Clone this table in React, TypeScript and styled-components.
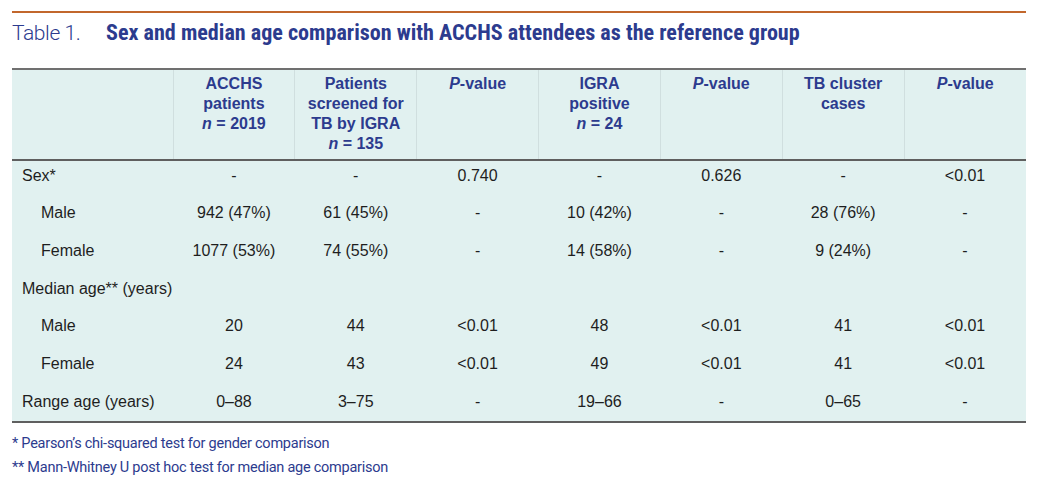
import React from "react";
import styled, { createGlobalStyle } from "styled-components";

const GlobalStyle = createGlobalStyle`
  html, body { margin: 0; padding: 0; background: #ffffff; }
  body { font-family: "Liberation Sans", Arial, sans-serif; }
`;

const BLUE = "#2c3b8e";

const Page = styled.div`
  width: 1014px;
  padding: 11px 12px 0 12px;
`;

const Rule = styled.div`
  height: 2px;
  background: #c2672c;
`;

const Title = styled.h1`
  margin: 6px 0 0 0;
  height: 26px;
  line-height: 26px;
  font-size: 21px;
  font-weight: 400;
  color: ${BLUE};
  white-space: nowrap;
  display: flex;
  align-items: baseline;
`;

const TableLabel = styled.span`
  display: inline-block;
  width: 94px;
  font-family: Roboto, "Liberation Sans", sans-serif;
  font-weight: 300;
  letter-spacing: -0.4px;
`;

const TitleText = styled.span`
  font-family: "Liberation Sans Narrow", "Roboto Condensed", Roboto, sans-serif;
  font-weight: 700;
  font-size: 22.1px;
`;

const Table = styled.table`
  margin-top: 23px;
  width: 1014px;
  border-collapse: collapse;
  table-layout: fixed;
  background: #e1f1f0;
  border-top: 2px solid #707070;
  border-bottom: 2px solid #5f5f5f;
  font-size: 16px;
  line-height: 20px;
`;

const HeadCell = styled.th<{ $first?: boolean }>`
  vertical-align: top;
  text-align: center;
  padding: 4px 0 5px 0;
  font-weight: 700;
  color: ${BLUE};
  white-space: nowrap;
  border-bottom: 2px solid #5f5f5f;
  border-left: ${(p) => (p.$first ? "none" : "1px solid #d0dfdf")};
`;

const Row = styled.tr`
  &:last-child td {
    padding-bottom: 9.3px;
  }
`;

const Cell = styled.td<{ $indent?: boolean; $label?: boolean }>`
  vertical-align: top;
  padding: 4.5px 0 13.2px ${(p) => (p.$label ? (p.$indent ? "29px" : "10px") : "0")};
  text-align: ${(p) => (p.$label ? "left" : "center")};
  color: #1e1e1e;
  white-space: nowrap;
`;

const Footnotes = styled.div`
  margin-top: 9px;
  font-family: Roboto, "Liberation Sans", sans-serif;
  font-size: 14.5px;
  letter-spacing: -0.25px;
  line-height: 24.4px;
  color: ${BLUE};
`;

type RowData = { label: string; indent?: boolean; values?: string[] };

const rows: RowData[] = [
  { label: "Sex*", values: ["-", "-", "0.740", "-", "0.626", "-", "<0.01"] },
  { label: "Male", indent: true, values: ["942 (47%)", "61 (45%)", "-", "10 (42%)", "-", "28 (76%)", "-"] },
  { label: "Female", indent: true, values: ["1077 (53%)", "74 (55%)", "-", "14 (58%)", "-", "9 (24%)", "-"] },
  { label: "Median age** (years)" },
  { label: "Male", indent: true, values: ["20", "44", "<0.01", "48", "<0.01", "41", "<0.01"] },
  { label: "Female", indent: true, values: ["24", "43", "<0.01", "49", "<0.01", "41", "<0.01"] },
  { label: "Range age (years)", values: ["0\u201388", "3\u201375", "-", "19\u201366", "-", "0\u201365", "-"] },
];

const PValue = () => (
  <>
    <i>P</i>-value
  </>
);

export default function App() {
  return (
    <Page>
      <GlobalStyle />
      <Rule />
      <Title>
        <TableLabel>Table 1.</TableLabel>
        <TitleText>Sex and median age comparison with ACCHS attendees as the reference group</TitleText>
      </Title>
      <Table>
        <colgroup>
          <col style={{ width: 161 }} />
          <col />
          <col />
          <col />
          <col />
          <col />
          <col />
          <col />
        </colgroup>
        <thead>
          <tr>
            <HeadCell $first />
            <HeadCell>
              ACCHS
              <br />
              patients
              <br />
              <i>n</i> = 2019
            </HeadCell>
            <HeadCell>
              Patients
              <br />
              screened for
              <br />
              TB by IGRA
              <br />
              <i>n</i> = 135
            </HeadCell>
            <HeadCell>
              <PValue />
            </HeadCell>
            <HeadCell>
              IGRA
              <br />
              positive
              <br />
              <i>n</i> = 24
            </HeadCell>
            <HeadCell>
              <PValue />
            </HeadCell>
            <HeadCell>
              TB cluster
              <br />
              cases
            </HeadCell>
            <HeadCell>
              <PValue />
            </HeadCell>
          </tr>
        </thead>
        <tbody>
          {rows.map((r, i) => (
            <Row key={i}>
              {r.values ? (
                <>
                  <Cell $label $indent={r.indent}>
                    {r.label}
                  </Cell>
                  {r.values.map((v, j) => (
                    <Cell key={j}>{v}</Cell>
                  ))}
                </>
              ) : (
                <Cell $label colSpan={8}>
                  {r.label}
                </Cell>
              )}
            </Row>
          ))}
        </tbody>
      </Table>
      <Footnotes>
        <div>* Pearson’s chi-squared test for gender comparison</div>
        <div>** Mann-Whitney U post hoc test for median age comparison</div>
      </Footnotes>
    </Page>
  );
}
